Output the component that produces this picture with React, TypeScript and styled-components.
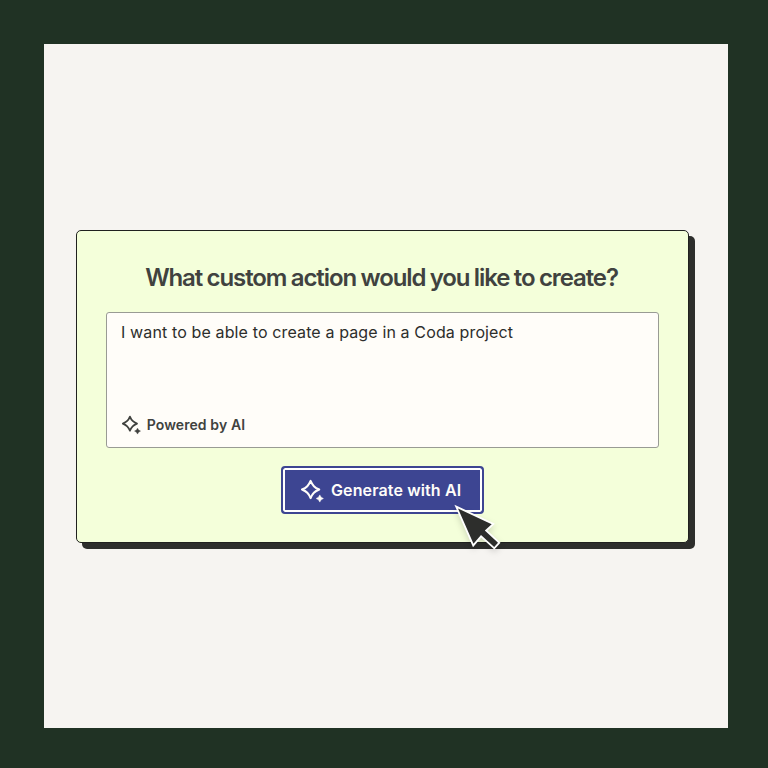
import React from "react";
import styled, { createGlobalStyle } from "styled-components";

const GlobalStyle = createGlobalStyle`
  * { box-sizing: border-box; }
  body { margin: 0; background: #203224; font-family: Inter, "Liberation Sans", sans-serif; }
`;

const Frame = styled.main`
  width: 768px;
  height: 768px;
  padding: 44px 40px 40px 44px;
  background: #203224;
  overflow: hidden;
`;

const Canvas = styled.section`
  height: 684px;
  padding: 186px 0 0 32px;
  background: #f6f4f1;
`;

const Card = styled.div`
  position: relative;
  display: flex;
  flex-direction: column;
  align-items: center;
  width: 613px;
  height: 313px;
  padding: 30px 29px 0;
  border: 1px solid #20211f;
  border-radius: 5px;
  background: #f4ffda;
  box-shadow: 6px 6px 0 #2d2e2c;
`;

const Title = styled.h1`
  margin: 0;
  padding-right: 2px;
  height: 34px;
  line-height: 34px;
  font-size: 24px;
  font-weight: 600;
  letter-spacing: -1.1px;
  word-spacing: -0.5px;
  white-space: nowrap;
  color: #40423f;
`;

const PromptBox = styled.div`
  display: flex;
  flex-direction: column;
  justify-content: space-between;
  width: 553px;
  height: 136px;
  margin-top: 17px;
  padding: 8px 14px 12px;
  border: 1px solid #999b94;
  border-radius: 3px;
  background: #fffdf9;
`;

const PromptText = styled.p`
  margin: 0;
  line-height: 22px;
  font-size: 16px;
  letter-spacing: 0.13px;
  white-space: nowrap;
  color: #2d2e2c;
`;

const Powered = styled.div`
  display: flex;
  align-items: center;
  gap: 6px;
  height: 22px;
  padding-left: 0.7px;
  font-size: 14px;
  font-weight: 600;
  letter-spacing: 0.1px;
  white-space: nowrap;
  color: #40423f;
`;

const GenerateButton = styled.button`
  display: flex;
  align-items: center;
  gap: 7px;
  width: 203px;
  height: 48px;
  margin-top: 18px;
  padding: 0 0 0 18px;
  border: 2px solid #3d4592;
  border-radius: 4px;
  background: #3d4592;
  box-shadow: inset 0 0 0 2px #fff;
  font: 600 16px Inter, "Liberation Sans", sans-serif;
  letter-spacing: 0.12px;
  white-space: nowrap;
  color: #fffdf9;
`;

const Icon = styled.svg<{ $size: number }>`
  flex: none;
  width: ${(p) => p.$size}px;
  height: ${(p) => p.$size}px;
  overflow: visible;
`;

const Pointer = styled.svg`
  position: absolute;
  left: 373px;
  top: 269px;
  width: 60px;
  height: 60px;
  filter: drop-shadow(0 3px 3px rgba(0, 0, 0, 0.15));
`;

const Sparkle = ({ size }: { size: number }) => (
  <Icon $size={size} viewBox="0 0 23 23" fill="none">
    <path
      d="M9.6 1.9Q11 5.3 12.9 7.2Q14.8 9.1 18.2 10.5Q14.8 11.9 12.9 13.8Q11 15.7 9.6 19.1Q8.2 15.7 6.3 13.8Q4.4 11.9 1 10.5Q4.4 9.1 6.3 7.2Q8.2 5.3 9.6 1.9Z"
      stroke="currentColor"
      strokeWidth="2.1"
      strokeLinejoin="round"
    />
    <path d="M18.8 15.9L20.1 18.2L22.4 19.5L20.1 20.8L18.8 23.1L17.5 20.8L15.2 19.5L17.5 18.2Z" fill="currentColor" stroke="currentColor" strokeWidth="0.5" />
  </Icon>
);

export default function App() {
  return (
    <>
      <GlobalStyle />
      <Frame>
        <Canvas>
          <Card>
            <Title>What custom action would you like to create?</Title>
            <PromptBox>
              <PromptText>I want to be able to create a page in a Coda project</PromptText>
              <Powered>
                <Sparkle size={19} />
                Powered by AI
              </Powered>
            </PromptBox>
            <GenerateButton>
              <Sparkle size={23} />
              Generate with AI
            </GenerateButton>
            <Pointer viewBox="450 500 60 60">
              <path
                d="M458 508.5L491.7 524.2L484.8 530.6L498 542.8L494.2 547L481 535L473.5 543.8Z"
                fill="#2d2e2c"
                stroke="#fff"
                strokeWidth="3.6"
                paintOrder="stroke"
              />
            </Pointer>
          </Card>
        </Canvas>
      </Frame>
    </>
  );
}
